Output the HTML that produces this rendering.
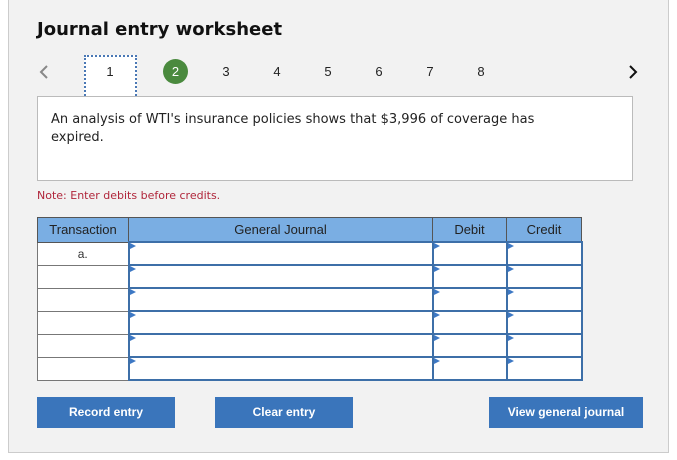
<!DOCTYPE html>
<html><head><style>
body{margin:0;width:677px;height:460px;background:#fff;font-family:"DejaVu Sans",Verdana,sans-serif;position:relative;overflow:hidden}
.panel{position:absolute;left:8px;top:-1px;width:661px;height:454px;background:#f2f2f2;border:1px solid #ccc;box-sizing:border-box}
.a{position:absolute}
h1{position:absolute;left:37px;top:19px;margin:0;font-size:18px;font-weight:bold;color:#111}
.n{position:absolute;top:64px;font-family:"Liberation Sans",Arial,sans-serif;font-size:13px;color:#222;width:20px;text-align:center}
table{position:absolute;left:37px;top:217px;border-collapse:collapse;font-family:"Liberation Sans",Arial,sans-serif;font-size:13px}
th{background:#7aaee3;border:1.5px solid #555;height:23px;font-weight:normal;color:#222;padding:0}
td{border:1.5px solid #777;height:21px;padding:0;background:#fff;position:relative}
td.i{border:2px solid #3d6fa8}
td.i::before{content:"";position:absolute;left:0;top:0;border-left:6px solid #3d78c4;border-top:3px solid transparent;border-bottom:3px solid transparent}
.btn{position:absolute;top:397px;height:31px;background:#3a75bb;color:#fff;font-family:"Liberation Sans",Arial,sans-serif;font-size:12px;font-weight:bold;text-align:center;line-height:31px}
</style></head><body>
<div class="panel"></div>
<h1>Journal entry worksheet</h1>
<svg class="a" style="left:38px;top:64px" width="12" height="16"><path d="M9 2L3 8L9 14" stroke="#888" stroke-width="2" fill="none"/></svg>
<div class="a" style="left:84px;top:55px;width:53px;height:44px;background:#fff;border:2px dotted #4a78b5;box-sizing:border-box"></div>
<div class="n" style="left:100px">1</div>
<div class="a" style="left:163px;top:59px;width:25px;height:25px;border-radius:50%;background:#4a8a3e;color:#fff;font-family:'Liberation Sans',Arial,sans-serif;font-size:13px;text-align:center;line-height:25px">2</div>
<div class="n" style="left:216px">3</div><div class="n" style="left:267px">4</div><div class="n" style="left:318px">5</div><div class="n" style="left:369px">6</div><div class="n" style="left:420px">7</div><div class="n" style="left:471px">8</div>
<svg class="a" style="left:627px;top:64px" width="12" height="16"><path d="M3 2L9 8L3 14" stroke="#111" stroke-width="2" fill="none"/></svg>
<div class="a" style="left:37px;top:96px;width:596px;height:85px;background:#fff;border:1px solid #bbb;box-sizing:border-box;padding:14px 13px;font-size:13px;line-height:18px;color:#222">An analysis of WTI's insurance policies shows that $3,996 of coverage has<br>expired.</div>
<div class="a" style="left:37px;top:189px;font-size:11px;color:#b0263b">Note: Enter debits before credits.</div>
<table>
<tr><th style="width:90px">Transaction</th><th style="width:303px">General Journal</th><th style="width:73px">Debit</th><th style="width:74px">Credit</th></tr>
<tr><td style="text-align:center;color:#333;font-size:12px">a.</td><td class="i"></td><td class="i"></td><td class="i"></td></tr>
<tr><td></td><td class="i"></td><td class="i"></td><td class="i"></td></tr>
<tr><td></td><td class="i"></td><td class="i"></td><td class="i"></td></tr>
<tr><td></td><td class="i"></td><td class="i"></td><td class="i"></td></tr>
<tr><td></td><td class="i"></td><td class="i"></td><td class="i"></td></tr>
<tr><td></td><td class="i"></td><td class="i"></td><td class="i"></td></tr>
</table>
<div class="btn" style="left:37px;width:138px">Record entry</div>
<div class="btn" style="left:215px;width:138px">Clear entry</div>
<div class="btn" style="left:489px;width:154px">View general journal</div>
</body></html>
